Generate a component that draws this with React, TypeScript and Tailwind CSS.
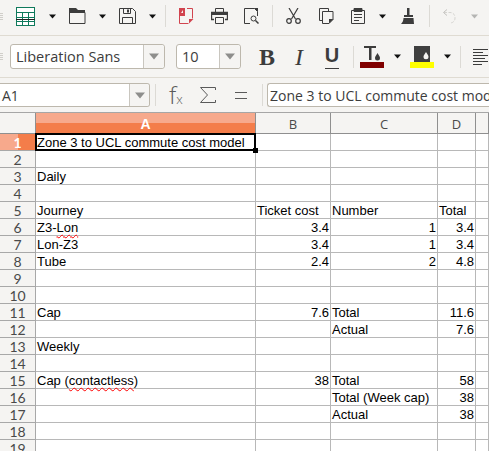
const GRAY = "#3c3c3c";

function Arrow({ className = "", light = false }: { className?: string; light?: boolean }) {
  return (
    <svg width="7" height="5" viewBox="0 0 7 5" className={className}>
      <path d="M0 0.5h7L3.5 4.5z" fill={light ? "#b5b5b3" : "#111111"} />
    </svg>
  );
}

function Sep({ className = "" }: { className?: string }) {
  return <div className={`w-px h-[22px] bg-[#dcdad5] ${className}`} />;
}

function Grip() {
  return (
    <div className="flex flex-col gap-px w-[3px] shrink-0">
      <div className="h-px bg-[#d0cec9]" />
      <div className="h-px bg-[#d0cec9]" />
      <div className="h-px bg-[#d0cec9]" />
      <div className="h-px bg-[#d0cec9]" />
    </div>
  );
}

function TableIcon({ className = "" }: { className?: string }) {
  return (
    <svg width="20" height="19" viewBox="0 0 20 19" className={className} fill="none">
      <rect x="0.5" y="0.5" width="18" height="18" stroke="#0f7a5c" fill="#fff" />
      <path d="M0 5.500h19M0 10.500h19M0 14.500h19M6.500 5v14M12.500 5v14" stroke="#0f7a5c" />
      <path d="M0 12.500h19" stroke="#222" strokeWidth="1" />
    </svg>
  );
}

function FolderIcon({ className = "" }: { className?: string }) {
  return (
    <svg width="17" height="16" viewBox="0 0 17 16" className={className} fill="none">
      <path d="M0.500 4.500h15.500v11H0.500z" stroke={GRAY} />
      <path d="M0 0h7l2 2h7v3H0z" fill={GRAY} />
    </svg>
  );
}

function SaveIcon({ className = "" }: { className?: string }) {
  return (
    <svg width="17" height="16" viewBox="0 0 17 16" className={className} fill="none">
      <path d="M0.500 0.500h13l3 3v12H0.500z" stroke={GRAY} />
      <path d="M4.500 1v4.500h7V1M3.500 15.500v-6h10v6" stroke={GRAY} />
      <rect x="8" y="1.500" width="2" height="3" fill={GRAY} />
    </svg>
  );
}

function PdfIcon({ className = "" }: { className?: string }) {
  return (
    <svg width="15" height="16" viewBox="0 0 15 16" className={className} fill="none">
      <path d="M8 0.500h5.500v10M0.500 8v7.500h9" stroke="#d1444f" />
      <path d="M0 0h6v8H0z" fill="#d1444f" />
      <path d="M2 5l2-3v3z" fill="#f5f4f2" />
      <path d="M10 15.500l4.500-4.500h-4.500z" fill="#d1444f" />
    </svg>
  );
}

function PrintIcon({ className = "" }: { className?: string }) {
  return (
    <svg width="17" height="16" viewBox="0 0 17 16" className={className} fill="none">
      <path d="M4.500 4V0.500h8V4" stroke={GRAY} />
      <path d="M3 11.500H0.500v-7h16v7H14" stroke={GRAY} strokeWidth="1.4" />
      <path d="M1 4h15v3H1z" fill={GRAY} />
      <path d="M4.500 9.500h8v6h-8z" stroke={GRAY} />
    </svg>
  );
}

function PreviewIcon({ className = "" }: { className?: string }) {
  return (
    <svg width="16" height="16" viewBox="0 0 16 16" className={className} fill="none">
      <path d="M6 15.500H0.500V0.500h10l3 3V8" stroke={GRAY} />
      <path d="M10 0h4v4z" fill={GRAY} />
      <circle cx="9.500" cy="10.500" r="2.500" stroke={GRAY} />
      <path d="M11.500 12.500l3 3" stroke={GRAY} strokeWidth="1.5" />
    </svg>
  );
}

function CutIcon({ className = "" }: { className?: string }) {
  return (
    <svg width="15" height="16" viewBox="0 0 15 16" className={className} fill="none">
      <path d="M3 0l6.500 11M12 0L5.500 11" stroke={GRAY} strokeWidth="1.2" />
      <circle cx="3" cy="13" r="2.300" stroke={GRAY} strokeWidth="1.200" />
      <circle cx="12" cy="13" r="2.300" stroke={GRAY} strokeWidth="1.200" />
    </svg>
  );
}

function CopyIcon({ className = "" }: { className?: string }) {
  return (
    <svg width="15" height="16" viewBox="0 0 15 16" className={className} fill="none">
      <path d="M3.500 12.500H0.500V0.500h9v3" stroke={GRAY} />
      <path d="M3.500 3.500h10.500v8l-4 4H3.500z" stroke={GRAY} fill="#f5f4f2" />
      <path d="M10 15.500l4.500-4.500h-4.500z" fill={GRAY} />
    </svg>
  );
}

function PasteIcon({ className = "" }: { className?: string }) {
  return (
    <svg width="14" height="16" viewBox="0 0 14 16" className={className} fill="none">
      <path d="M0.500 2.500h13v13H0.500z" stroke={GRAY} />
      <path d="M3 0.500h8V3.500H3z" fill={GRAY} stroke={GRAY} />
      <path d="M3 6.500h8M3 9.500h8M3 12.500h5" stroke={GRAY} />
    </svg>
  );
}

function BrushIcon({ className = "" }: { className?: string }) {
  return (
    <svg width="14" height="16" viewBox="0 0 14 16" className={className} fill="none">
      <rect x="6" y="0" width="2.500" height="7" fill={GRAY} />
      <path d="M3 7h9v2H3z" fill={GRAY} />
      <path d="M2.500 10H12.500L13 16H0C1.500 14.500 2.500 12.500 2.500 10z" fill={GRAY} />
    </svg>
  );
}

function UndoIcon({ className = "" }: { className?: string }) {
  return (
    <svg width="13" height="15" viewBox="0 0 13 15" className={className} fill="none">
      <path d="M1 3.500h6C10.500 3.500 12 6 12 9c0 3-2 5-5 5" stroke="#d5d4d1" strokeDasharray="3 1.500" />
      <path d="M4 0.500L0.500 3.500 4 6.500" stroke="#c2c1be" />
    </svg>
  );
}

function FontColorIcon({ className = "" }: { className?: string }) {
  return (
    <svg width="24" height="23" viewBox="0 0 24 23" className={className}>
      <path d="M4 1h12v2h-4.500v12h-2.500V3H4z" fill={GRAY} />
      <path d="M17.500 8c1.500 2.500 2.500 3.500 2.500 5a2.500 2.500 0 0 1-5 0c0-1.500 1-2.500 2.500-5z" fill={GRAY} />
      <rect x="0" y="17" width="24" height="6" fill="#800000" />
    </svg>
  );
}

function HighlightIcon({ className = "" }: { className?: string }) {
  return (
    <svg width="24" height="23" viewBox="0 0 24 23" className={className}>
      <rect x="4" y="1" width="16" height="16" fill="#3f3f3f" />
      <path d="M16 7c1.400 2.200 2.500 3.300 2.500 4.700a2.500 2.500 0 0 1-5 0C13.500 10.300 14.600 9.200 16 7z" fill="#f5f4f2" />
      <rect x="0" y="17" width="24" height="6" fill="#ffff00" />
    </svg>
  );
}

function AlignIcon({ className = "" }: { className?: string }) {
  return (
    <svg width="15" height="16" viewBox="0 0 15 16" className={className} fill="none">
      <path d="M0 0.500h15M0 3.500h10M0 6.500h15M0 9.500h12M0 12.500h15M0 15.500h9" stroke={GRAY} />
    </svg>
  );
}

function SigmaIcon({ className = "" }: { className?: string }) {
  return (
    <svg width="16" height="16" viewBox="0 0 16 16" className={className} fill="none">
      <path d="M15.500 3V0.500H0.500L7.500 8 0.500 15.500H15.500V13" stroke="#5a5a5a" />
    </svg>
  );
}

function EqualIcon({ className = "" }: { className?: string }) {
  return (
    <svg width="12" height="7" viewBox="0 0 12 7" className={className} fill="none">
      <path d="M0 0.500h12M0 6.500h12" stroke="#5a5a5a" />
    </svg>
  );
}

function ComboDivider() {
  return (
    <div className="flex items-center justify-center h-full border-l border-[#c9c6bf] bg-[#f5f4f2] rounded-r-[3px]">
      <svg width="10" height="7" viewBox="0 0 10 7">
        <path d="M0 0.500h10L5 6.500z" fill="#8e8e8c" />
      </svg>
    </div>
  );
}

function Toolbar() {
  return (
    <div className="flex items-center h-[36px] pb-[3px] bg-[#f5f4f2] border-b border-[#dfdbd2] overflow-hidden">
      <Grip />
      <TableIcon className="ml-[13px] shrink-0" />
      <Arrow className="ml-[13px] shrink-0" />
      <FolderIcon className="ml-[13px] shrink-0" />
      <Arrow className="ml-[13px] shrink-0" />
      <SaveIcon className="ml-[13px] shrink-0" />
      <Arrow className="ml-[13px] shrink-0" />
      <Sep className="ml-[9px] shrink-0" />
      <PdfIcon className="ml-[13px] shrink-0" />
      <PrintIcon className="ml-[17px] shrink-0" />
      <PreviewIcon className="ml-[16px] shrink-0" />
      <Sep className="ml-[12px] shrink-0" />
      <CutIcon className="ml-[13px] shrink-0" />
      <CopyIcon className="ml-[18px] shrink-0" />
      <PasteIcon className="ml-[17px] shrink-0" />
      <Arrow className="ml-[14px] shrink-0" />
      <BrushIcon className="ml-[15px] shrink-0" />
      <Sep className="ml-[14px] shrink-0" />
      <UndoIcon className="ml-[13px] shrink-0" />
      <Arrow light className="ml-[15px] shrink-0" />
    </div>
  );
}

function FormatBar() {
  return (
    <div className="flex items-center h-[42px] bg-[#f5f4f2] border-b border-[#dfdbd2] overflow-hidden">
      <Grip />
      <div className="ml-[7px] w-[155px] h-[25px] shrink-0 grid grid-cols-[1fr_21px] items-center bg-white border border-[#bdb8ad] rounded-[3px] font-['Open_Sans','Noto_Sans',sans-serif] text-[14.5px] text-[#3c3c3c]">
        <span className="pl-[5px] truncate">Liberation Sans</span>
        <ComboDivider />
      </div>
      <div className="ml-[11px] w-[65px] h-[25px] shrink-0 grid grid-cols-[1fr_21px] items-center bg-white border border-[#bdb8ad] rounded-[3px] font-['Open_Sans','Noto_Sans',sans-serif] text-[14.5px] text-[#3c3c3c]">
        <span className="pl-[5px]">10</span>
        <ComboDivider />
      </div>
      <span className="ml-[17px] w-[18px] shrink-0 font-['Liberation_Serif',serif] font-bold text-[24px] leading-none text-[#3c3c3c] text-center">B</span>
      <span className="ml-[16px] w-[14px] shrink-0 font-['Liberation_Serif',serif] italic text-[24px] leading-none text-[#3c3c3c] text-center">I</span>
      <span className="ml-[19px] w-[14px] shrink-0 flex flex-col items-center font-['Liberation_Sans',sans-serif] font-bold text-[20px] leading-none text-[#3c3c3c] border-b border-[#3c3c3c] pb-[3px]">U</span>
      <Sep className="ml-[14px] shrink-0" />
      <FontColorIcon className="ml-[6px] shrink-0" />
      <Arrow className="ml-[10px] shrink-0" />
      <HighlightIcon className="ml-[9px] shrink-0" />
      <Arrow className="ml-[10px] shrink-0" />
      <Sep className="ml-[9px] shrink-0" />
      <AlignIcon className="ml-[12px] shrink-0" />
    </div>
  );
}

function FormulaBar() {
  return (
    <div className="flex items-center h-[35px] bg-[#f5f4f2] border-b border-[#a6a6a6] overflow-hidden">
      <div className="w-[150px] h-[24px] shrink-0 grid grid-cols-[1fr_20px] items-center bg-white border border-[#bdb8ad] border-l-0 rounded-r-[3px] font-['Open_Sans','Noto_Sans',sans-serif] text-[14px] text-[#3c3c3c]">
        <span className="pl-[2px]">A1</span>
        <ComboDivider />
      </div>
      <Sep className="ml-[5px] shrink-0" />
      <span className="ml-[13px] w-[15px] shrink-0 whitespace-nowrap font-['Open_Sans',sans-serif] font-light text-[24px] leading-none text-[#5a5a5a]">
        f<span className="text-[13px]">x</span>
      </span>
      <SigmaIcon className="ml-[16px] shrink-0" />
      <EqualIcon className="ml-[19px] shrink-0" />
      <Sep className="ml-[15px] shrink-0" />
      <div className="ml-[4px] grow h-[24px] flex items-center bg-white border border-[#bdb8ad] border-r-0 rounded-l-[3px] font-['Open_Sans','Noto_Sans',sans-serif] text-[14px] text-[#3c3c3c] whitespace-nowrap overflow-hidden">
        <span className="pl-[2px]">Zone 3 to UCL commute cost model</span>
      </div>
    </div>
  );
}

type Row = [React.ReactNode?, string?, string?, string?];

const wavy = "underline decoration-wavy decoration-[#ff0000] decoration-1 underline-offset-2";

const rows: Row[] = [
  ["Zone 3 to UCL commute cost model"],
  [],
  ["Daily"],
  [],
  ["Journey", "Ticket cost", "Number", "Total"],
  [<>Z3-<span className={wavy}>Lon</span></>, "3.4", "1", "3.4"],
  ["Lon-Z3", "3.4", "1", "3.4"],
  ["Tube", "2.4", "2", "4.8"],
  [],
  [],
  ["Cap", "7.6", "Total", "11.6"],
  [undefined, undefined, "Actual", "7.6"],
  ["Weekly"],
  [],
  [<>Cap (<span className={wavy}>contactless</span>)</>, "38", "Total", "58"],
  [undefined, undefined, "Total (Week cap)", "38"],
  [undefined, undefined, "Actual", "38"],
  [],
  [],
];

const isNumber = (v?: string) => v !== undefined && /^[\d.]+$/.test(v);

function Cell({ value, selected }: { value?: React.ReactNode; selected?: boolean }) {
  const right = typeof value === "string" && isNumber(value);
  return (
    <div
      className={`h-[17px] border-r border-b border-[#b8b8b8] px-[1px] leading-[18px] whitespace-nowrap ${right ? "text-right" : ""} ${selected ? "relative z-10" : ""}`}
    >
      {value}
      {selected && (
        <>
          <div className="absolute -left-px -top-px right-[-1px] bottom-[-1px] border-2 border-black" />
          <div className="absolute right-[-3px] bottom-[-3px] w-[5px] h-[5px] bg-black" />
        </>
      )}
    </div>
  );
}

function ColHead({ label, active }: { label: string; active?: boolean }) {
  if (active) {
    return (
      <div className="h-[21px] border-r border-b border-[#8f8f8f] bg-[linear-gradient(#f7a98c_0,#f7a98c_10px,#f47d4a_10px)] text-white font-bold text-center leading-[22px] font-['Liberation_Sans',sans-serif] text-[14px]">
        {label}
      </div>
    );
  }
  return (
    <div className="h-[21px] border-r border-b border-[#8f8f8f] bg-[#f5f4f2] text-[#4a4a4a] text-center leading-[22px] font-['Open_Sans','Noto_Sans',sans-serif] text-[13px]">
      {label}
    </div>
  );
}

function Sheet() {
  return (
    <div className="grid grid-cols-[36px_220px_75px_107px_38px_1fr] auto-rows-min font-['Liberation_Sans',sans-serif] text-[13px] text-black bg-white">
      <div className="h-[21px] border-r border-b border-[#8f8f8f] bg-[#f5f4f2]" />
      <ColHead label="A" active />
      <ColHead label="B" />
      <ColHead label="C" />
      <ColHead label="D" />
      <ColHead label="" />
      {rows.map((r, i) => (
        <div key={i} className="contents">
          <div
            className={`h-[17px] border-r border-b border-[#a8a8a8] text-center leading-[17px] font-['Lato','Open_Sans',sans-serif] text-[14px] ${
              i === 0
                ? "bg-[linear-gradient(90deg,#f7a98c_0,#f7a98c_18px,#f47d4a_18px)] text-white font-bold"
                : "bg-[#f5f4f2] text-[#4a4a4a]"
            }`}
          >
            {i + 1}
          </div>
          <Cell value={r[0]} selected={i === 0} />
          <Cell value={r[1]} />
          <Cell value={r[2]} />
          <Cell value={r[3]} />
          <Cell />
        </div>
      ))}
    </div>
  );
}

export default function App() {
  return (
    <div className="w-[489px] h-[451px] overflow-hidden bg-white">
      <Toolbar />
      <FormatBar />
      <FormulaBar />
      <Sheet />
    </div>
  );
}
